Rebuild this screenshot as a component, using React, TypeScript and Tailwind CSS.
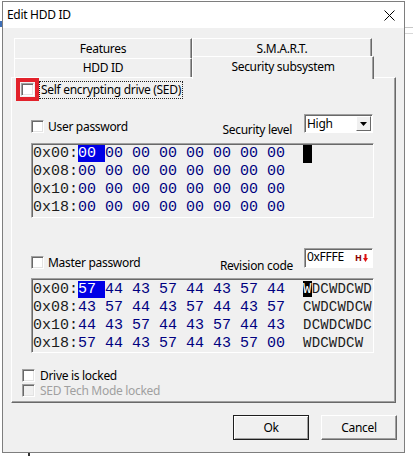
import React from 'react';

const Check: React.FC<{ disabled?: boolean }> = ({ disabled }) => (
  <span
    className={`block w-[13px] h-[13px] shrink-0 border border-t-[#a0a0a0] border-l-[#a0a0a0] border-b-white border-r-white shadow-[inset_1px_1px_0_#696969,inset_-1px_-1px_0_#e3e3e3] ${
      disabled ? 'bg-[#f0f0f0]' : 'bg-white'
    }`}
  />
);

const BackTab: React.FC<{ label: string; width: string }> = ({ label, width }) => (
  <div
    className={`${width} h-full flex items-center justify-center border-t border-l border-white border-r border-r-[#696969] shadow-[inset_-1px_0_0_#a0a0a0] bg-[#f0f0f0] text-[12px] leading-[14px] text-black`}
  >
    {label}
  </div>
);

type HexRow = { addr: string; bytes: string; hl?: string; ascii?: string; asciiHl?: string; cursor?: boolean };

const HexBox: React.FC<{ rows: HexRow[] }> = ({ rows }) => (
  <div className="ml-[19px] w-[343px] h-[75px] border border-t-[#a0a0a0] border-l-[#a0a0a0] border-b-white border-r-white shadow-[inset_1px_1px_0_#696969] pt-[1px] pl-[1px] font-['Liberation_Mono',monospace] text-[15px] leading-[18px] tracking-normal whitespace-pre overflow-hidden">
    {rows.map((r) => (
      <div key={r.addr} className="h-[18px]">
        <span className="text-[#1c1c1c]">{r.addr}</span>
        {r.hl && <span className="bg-[#0000e6] text-white">{r.hl}</span>}
        <span className="text-[#000080]">{r.bytes}</span>
        {r.cursor && <span className="inline-block w-[9px] h-[18px] bg-black align-top" />}
        {r.asciiHl && <span className="bg-black text-white text-[14px] tracking-[0.2px]">{r.asciiHl}</span>}
        {r.ascii && <span className="text-[#1c1c1c] text-[14px] tracking-[0.2px]">{r.ascii}</span>}
      </div>
    ))}
  </div>
);

const userRows: HexRow[] = [
  { addr: '0x00:', hl: '00 ', bytes: '00 00 00 00 00 00 00  ', cursor: true },
  { addr: '0x08:', bytes: '00 00 00 00 00 00 00 00' },
  { addr: '0x10:', bytes: '00 00 00 00 00 00 00 00' },
  { addr: '0x18:', bytes: '00 00 00 00 00 00 00 00' },
];

const masterRows: HexRow[] = [
  { addr: '0x00:', hl: '57 ', bytes: '44 43 57 44 43 57 44  ', asciiHl: 'W', ascii: 'DCWDCWD' },
  { addr: '0x08:', bytes: '43 57 44 43 57 44 43 57  ', ascii: 'CWDCWDCW' },
  { addr: '0x10:', bytes: '44 43 57 44 43 57 44 43  ', ascii: 'DCWDCWDC' },
  { addr: '0x18:', bytes: '57 44 43 57 44 43 57 00  ', ascii: 'WDCWDCW' },
];

export default function App() {
  return (
    <div className="w-[413px] h-[456px] bg-white relative overflow-hidden font-['Noto_Sans',sans-serif] text-[12px] tracking-[-0.3px] text-black">
      {/* bits of the desktop behind the dialog */}
      <div className="absolute left-0 top-[21px] w-[2px] h-[6px] bg-[#3d6fb8]" />
      <div className="absolute right-0 top-[27px] w-[8px] h-[1px] bg-[#c8c8c8]" />
      <div className="absolute right-0 top-[33px] w-[8px] h-[1px] bg-[#d8d8d8]" />
      <div className="absolute left-[28px] top-[453px] w-[2px] h-[3px] bg-[#333]" />

      <div className="ml-[2px] mt-[1px] w-[403px] h-[452px] border border-[#7e7e7e] flex flex-col">
        {/* title bar */}
        <div className="h-[26px] bg-white flex items-center pl-[4px] pr-[9px]">
          <span className="leading-[14px] flex-1">Edit HDD ID</span>
          <svg width="11" height="11" viewBox="0 0 11 11" className="text-black">
            <path d="M0.5 0.5 L10.5 10.5 M10.5 0.5 L0.5 10.5" stroke="currentColor" strokeWidth="1" fill="none" />
          </svg>
        </div>

        {/* client */}
        <div className="flex-1 bg-[#f0f0f0] flex flex-col">
          <div className="pt-[10px] pl-[11px]">
            <div className="flex h-[20px]">
              <BackTab label="Features" width="w-[178px]" />
              <BackTab label="S.M.A.R.T." width="w-[180px]" />
            </div>
            <div className="flex h-[19px]">
              <BackTab label="HDD ID" width="w-[178px]" />
              <div className="relative z-10 w-[182px] h-[23px] -mt-[2px] flex items-start justify-center pt-[3px] border-t border-l border-white border-r border-r-[#696969] shadow-[inset_-1px_0_0_#a0a0a0] bg-[#f0f0f0] leading-[14px]">
                Security subsystem
              </div>
            </div>
          </div>

          {/* tab page */}
          <div className="ml-[8px] w-[385px] h-[326px] border border-t-white border-l-white border-r-[#696969] border-b-[#696969] shadow-[inset_-1px_-1px_0_#a0a0a0] flex flex-col overflow-hidden">
            <div className="flex items-center">
              <div className="ml-[4px] w-[23px] h-[23px] border-[4px] border-[#e2222b] flex items-center justify-center">
                <Check />
              </div>
              <span className="border border-dotted border-[#222] px-[1px] leading-[16px]">Self encrypting drive (SED)</span>
            </div>

            <div className="mt-[13px] h-[20px] flex items-start pr-[22px]">
              <div className="ml-[19px] mt-[6px] flex items-center">
                <Check />
                <span className="ml-[4px] leading-[13px]">User password</span>
              </div>
              <div className="flex-1" />
              <span className="mt-[9px] leading-[14px]">Security level</span>
              <div className="ml-[12px] w-[69px] h-[19px] bg-white border border-t-[#a0a0a0] border-l-[#a0a0a0] border-b-white border-r-white shadow-[inset_1px_1px_0_#696969] flex items-center">
                <span className="flex-1 pl-[2px] leading-[14px]">High</span>
                <div className="w-[15px] h-[15px] mr-[1px] bg-[#f0f0f0] border border-t-white border-l-white border-b-[#696969] border-r-[#696969] flex items-center justify-center">
                  <svg width="7" height="4" viewBox="0 0 7 4">
                    <path d="M0 0 H7 L3.5 4 Z" fill="#000" />
                  </svg>
                </div>
              </div>
            </div>

            <div className="mt-[9px]">
              <HexBox rows={userRows} />
            </div>

            <div className="mt-[30px] h-[20px] flex items-start pr-[22px]">
              <div className="ml-[19px] mt-[8px] flex items-center">
                <Check />
                <span className="ml-[4px] leading-[13px]">Master password</span>
              </div>
              <div className="flex-1" />
              <span className="mt-[11px] leading-[14px]">Revision code</span>
              <div className="ml-[11px] w-[69px] h-[20px] bg-white border border-t-[#a0a0a0] border-l-[#a0a0a0] border-b-white border-r-white shadow-[inset_1px_1px_0_#696969] flex items-center pl-[2px] pr-[4px]">
                <span className="flex-1 leading-[14px] -mt-[3px]">0xFFFE</span>
                <span className="flex items-center -mt-[1px]">
                  <span className="text-[9px] font-bold leading-[10px] tracking-normal text-[#8b0000]">H</span>
                  <svg width="5" height="8" viewBox="0 0 5 8" className="ml-[1px]">
                    <path d="M1.5 0 H3.5 V4 H5 L2.5 8 L0 4 H1.5 Z" fill="#e01010" />
                  </svg>
                </span>
              </div>
            </div>

            <div className="mt-[10px]">
              <HexBox rows={masterRows} />
            </div>

            <div className="mt-[15px] h-[15px] flex items-center">
              <div className="ml-[10px]">
                <Check />
              </div>
              <span className="ml-[5px] leading-[15px]">Drive is locked</span>
            </div>
            <div className="h-[15px] flex items-center">
              <div className="ml-[10px]">
                <Check disabled />
              </div>
              <span className="ml-[5px] leading-[15px] text-[#a0a0a0]">SED Tech Mode locked</span>
            </div>
          </div>

          {/* buttons */}
          <div className="mt-[12px] flex justify-end gap-[12px] pr-[7px]">
            <button className="w-[76px] h-[25px] bg-[#f0f0f0] border border-[#1e1e1e] shadow-[inset_1px_1px_0_#fff,inset_-1px_-1px_0_#a0a0a0] leading-[14px]">
              Ok
            </button>
            <button className="w-[76px] h-[25px] bg-[#f0f0f0] border border-t-white border-l-white border-b-[#696969] border-r-[#696969] shadow-[inset_-1px_-1px_0_#a0a0a0] leading-[14px]">
              Cancel
            </button>
          </div>
        </div>
      </div>
    </div>
  );
}
